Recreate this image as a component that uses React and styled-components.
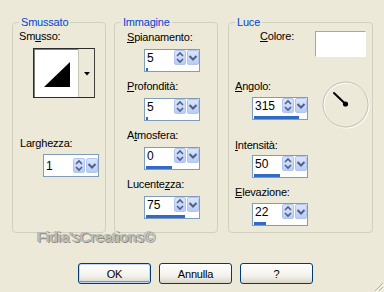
import React from "react";
import styled, { createGlobalStyle } from "styled-components";

const GlobalStyle = createGlobalStyle`
  html, body {
    margin: 0;
    padding: 0;
    background: #ece9d8;
    overflow: hidden;
  }
`;

export default function App() {
  return (
    <>
      <GlobalStyle />
      <Dialog>
        <Groups>
          <Group $w={94} $gap={8}>
            <Legend>Smussato</Legend>
            <GroupBody $pad="1px 0 0 6px">
              <Label>
                Sm<u>u</u>sso:
              </Label>
              <BevelPicker>
                <BevelPreview>
                  <svg width="26" height="25" viewBox="0 0 26 25">
                    <polygon points="0,25 26,0 26,25" fill="#000" />
                  </svg>
                </BevelPreview>
                <BevelDrop>
                  <svg width="6" height="4" viewBox="0 0 6 4">
                    <polygon points="0,0 6,0 3,3.5" fill="#000" />
                  </svg>
                </BevelDrop>
              </BevelPicker>
              <Label $mt={39} $ml={1}>
                Larghezza:
              </Label>
              <SpinBox value="1" $mt={4} $ml={24} />
            </GroupBody>
          </Group>

          <Group $w={104} $gap={10}>
            <Legend>Immagine</Legend>
            <GroupBody $pad="2px 0 0 12px">
              <Field label={<><u>S</u>pianamento:</>} value="5" bar={3} />
              <Field label={<><u>P</u>rofondità:</>} value="5" bar={3} $mt={8} />
              <Field label={<>A<u>t</u>mosfera:</>} value="0" bar={50} $mt={8} />
              <Field label={<>Lucente<u>z</u>za:</>} value="75" bar={75} $mt={8} />
            </GroupBody>
          </Group>

          <Group $w={145} $gap={0}>
            <Legend>Luce</Legend>
            <GroupBody $pad="2px 6px 0 6px">
              <ColorRow>
                <Label $ml={25} $mt={-1}>
                  <u>C</u>olore:
                </Label>
                <Swatch />
              </ColorRow>
              <AngleRow>
                <Field label={<><u>A</u>ngolo:</>} value="315" bar={87} $gapLabel={4} />
                <Dial>
                  <svg width="48" height="48" viewBox="0 0 48 48">
                    <circle cx="24" cy="24" r="22.5" fill="none" stroke="#ffffff" strokeWidth="1" transform="translate(0.6 0.6)" />
                    <circle cx="23.5" cy="23.5" r="22.5" fill="none" stroke="#c4c2b4" strokeWidth="1" />
                    <line x1="12" y1="12" x2="23.5" y2="23" stroke="#000" strokeWidth="2" strokeLinecap="round" />
                    <circle cx="23.5" cy="23" r="2.6" fill="#000" />
                  </svg>
                </Dial>
              </AngleRow>
              <Field label={<><u>I</u>ntensità:</>} value="50" bar={50} $gapLabel={3} $mt={10} />
              <Field label={<><u>E</u>levazione:</>} value="22" bar={24} $gapLabel={4} $mt={8} />
            </GroupBody>
          </Group>
        </Groups>

        <Buttons>
          <Button $default>OK</Button>
          <Button>Annulla</Button>
          <Button>?</Button>
        </Buttons>

        <Watermark>Fidia'sCreations©</Watermark>
        <Grip>
          <svg width="12" height="12" viewBox="0 0 12 12">
            <line x1="11" y1="3" x2="3" y2="11" stroke="#b8b4a2" />
            <line x1="11" y1="7" x2="7" y2="11" stroke="#b8b4a2" />
            <line x1="12" y1="4" x2="4" y2="12" stroke="#fff" />
            <line x1="12" y1="8" x2="8" y2="12" stroke="#fff" />
          </svg>
        </Grip>
      </Dialog>
    </>
  );
}

const Field = ({ label, value, bar, $mt = 0, $gapLabel = 5 }) => (
  <FieldWrap $mt={$mt}>
    <Label>{label}</Label>
    <SpinBox value={value} bar={bar} $mt={$gapLabel} $ml={17} />
  </FieldWrap>
);

const SpinBox = ({ value, bar, $mt = 0, $ml = 0 }) => (
  <SpinFrame $mt={$mt} $ml={$ml} $center={bar === undefined}>
    <SpinTop>
      <SpinValue>{value}</SpinValue>
      <SpinButton>
        <svg width="12" height="15" viewBox="0 0 12 15">
          <polyline points="3,6 6,3 9,6" fill="none" stroke="#4d6185" strokeWidth="1.6" />
          <polyline points="3,9 6,12 9,9" fill="none" stroke="#4d6185" strokeWidth="1.6" />
        </svg>
      </SpinButton>
      <SpinButton>
        <svg width="12" height="15" viewBox="0 0 12 15">
          <polyline points="2.5,6 6,9.5 9.5,6" fill="none" stroke="#4d6185" strokeWidth="2" />
        </svg>
      </SpinButton>
    </SpinTop>
    {bar !== undefined && (
      <BarTrack>
        <BarFill style={{ width: `${bar}%` }} />
      </BarTrack>
    )}
  </SpinFrame>
);

const Dialog = styled.div`
  position: relative;
  width: 384px;
  height: 292px;
  box-sizing: border-box;
  padding: 16px 0 0 12px;
  background: #ece9d8;
  font-family: "Liberation Sans", Arial, sans-serif;
  font-size: 11px;
  letter-spacing: -0.2px;
  color: #000;
`;

const Groups = styled.div`
  display: flex;
  align-items: flex-start;
`;

const Group = styled.fieldset`
  margin: 0 ${(p) => p.$gap}px 0 0;
  padding: 0;
  width: ${(p) => p.$w}px;
  height: 217px;
  box-sizing: border-box;
  border: 1px solid #d0d0bf;
  border-radius: 4px;
  min-inline-size: 0;
`;

const Legend = styled.legend`
  margin-left: 6px;
  padding: 0 2px;
  font-size: 11px;
  line-height: 13px;
  color: #0046d5;
`;

const GroupBody = styled.div`
  display: flex;
  flex-direction: column;
  align-items: flex-start;
  padding: ${(p) => p.$pad};
`;

const FieldWrap = styled.div`
  display: flex;
  flex-direction: column;
  align-items: flex-start;
  margin-top: ${(p) => p.$mt}px;
`;

const Label = styled.div`
  line-height: 13px;
  white-space: nowrap;
  margin-top: ${(p) => p.$mt || 0}px;
  margin-left: ${(p) => p.$ml || 0}px;

  u {
    text-decoration-thickness: 1px;
    text-underline-offset: 1px;
  }
`;

const BevelPicker = styled.div`
  display: flex;
  margin: 5px 0 0 14px;
  width: 62px;
  height: 50px;
  box-sizing: border-box;
  border: 1px solid #2b2b2b;
  border-right-color: #404040;
  box-shadow: inset 1px 1px 0 #808080;
  background: #fff;
`;

const BevelPreview = styled.div`
  flex: 1;
  display: flex;
  align-items: center;
  justify-content: center;
  padding: 2px 0 0 2px;
`;

const BevelDrop = styled.div`
  width: 15px;
  display: flex;
  align-items: center;
  justify-content: center;
  background: #ece9d8;
  border-left: 1px solid #c8c5b5;
  padding-top: 2px;
`;

const SpinFrame = styled.div`
  display: flex;
  flex-direction: column;
  justify-content: ${(p) => (p.$center ? "center" : "flex-start")};
  width: 56px;
  height: 23px;
  box-sizing: border-box;
  margin-top: ${(p) => p.$mt}px;
  margin-left: ${(p) => p.$ml}px;
  border: 1px solid #7f9db9;
  background: #fff;
`;

const SpinTop = styled.div`
  display: flex;
  height: 15px;
  gap: 1px;
`;

const SpinValue = styled.div`
  flex: 1;
  padding-left: 2px;
  font-size: 12px;
  line-height: 16px;
  letter-spacing: 0;
`;

const SpinButton = styled.div`
  width: 12px;
  height: 15px;
  box-sizing: border-box;
  border-radius: 2px;
  background: linear-gradient(#dbe5fd, #b9cbf6);
  border: 1px solid #b2c4f0;
  display: flex;
  align-items: center;
  justify-content: center;

  svg {
    flex: none;
  }
`;

const BarTrack = styled.div`
  margin: 3px 1px 0 1px;
  height: 3px;
`;

const BarFill = styled.div`
  height: 100%;
  background: #316ac5;
`;

const ColorRow = styled.div`
  display: flex;
  align-items: flex-start;
  justify-content: space-between;
  width: 131px;
`;

const Swatch = styled.div`
  width: 51px;
  height: 26px;
  box-sizing: border-box;
  border: 1px solid;
  border-color: #aca899 #fff #fff #aca899;
  background: #fff;
`;

const AngleRow = styled.div`
  display: flex;
  align-items: flex-start;
  margin-top: 23px;
`;

const Dial = styled.div`
  width: 48px;
  height: 48px;
  margin: 1px 0 0 14px;
`;

const Buttons = styled.div`
  display: flex;
  gap: 8px;
  margin: 30px 0 0 66px;
`;

const Button = styled.button`
  width: 73px;
  height: 21px;
  padding: 0;
  border: 1px solid #003c74;
  border-radius: 3px;
  background: linear-gradient(#ffffff 0%, #f3f2ec 60%, #d9d5c8 100%);
  box-shadow: ${(p) =>
    p.$default ? "inset 0 0 0 1px #c5d5fc, inset 0 -1px 0 1px #6b8ee8" : "none"};
  font-family: "Liberation Sans", Arial, sans-serif;
  font-size: 11px;
  font-weight: 400;
  letter-spacing: -0.2px;
  color: #000;
`;

const Watermark = styled.div`
  position: absolute;
  left: 37px;
  top: 228px;
  font-size: 15px;
  font-weight: 400;
  letter-spacing: 0;
  color: #bebdb6;
  text-shadow: 1px 1px 0 #8a8982, -1px 0 0 #b4b3ac;
  white-space: nowrap;
`;

const Grip = styled.div`
  position: absolute;
  right: 0;
  bottom: 0;
  width: 12px;
  height: 12px;
`;
